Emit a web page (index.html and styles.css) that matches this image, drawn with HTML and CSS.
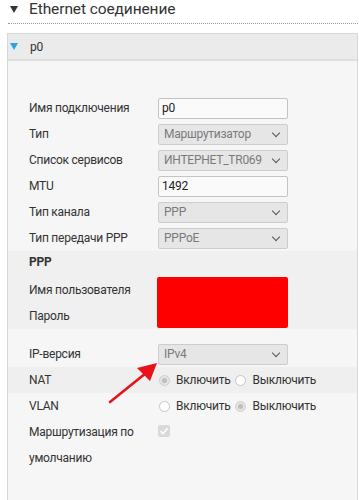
FILE: index.html
```html
<!DOCTYPE html>
<html lang="ru">
<head>
    <meta charset="UTF-8">
    <meta name="viewport" content="width=device-width, initial-scale=1.0">
    <title>Ethernet соединение</title>
    <link rel="stylesheet" href="styles.css">
</head>
<body>
    <div class="section-title">
        <span class="caret-dark"></span>
        <span>Ethernet соединение</span>
    </div>

    <div class="panel">
        <div class="panel-head">
            <span class="caret-blue"></span>
            <span>p0</span>
        </div>

        <div class="panel-body">
            <div class="row">
                <label class="label">Имя подключения</label>
                <input class="field" type="text" value="p0">
            </div>
            <div class="row">
                <label class="label">Тип</label>
                <div class="select"><span>Маршрутизатор</span><span class="chevron"></span></div>
            </div>
            <div class="row">
                <label class="label">Список сервисов</label>
                <div class="select"><span>ИНТЕРНЕТ_TR069</span><span class="chevron"></span></div>
            </div>
            <div class="row">
                <label class="label">MTU</label>
                <input class="field" type="text" value="1492">
            </div>
            <div class="row">
                <label class="label">Тип канала</label>
                <div class="select"><span>PPP</span><span class="chevron"></span></div>
            </div>
            <div class="row">
                <label class="label">Тип передачи PPP</label>
                <div class="select"><span>PPPoE</span><span class="chevron"></span></div>
            </div>

            <!-- PPP credentials -->
            <div class="ppp">
                <div class="ppp-title">PPP</div>
                <div class="ppp-grid">
                    <label class="label">Имя пользователя</label>
                    <div class="hidden-box"></div>
                    <label class="label">Пароль</label>
                </div>
            </div>

            <div class="row row-gap">
                <label class="label">IP-версия</label>
                <div class="select"><span>IPv4</span><span class="chevron"></span></div>
            </div>
            <div class="row row-shade">
                <label class="label">NAT</label>
                <div class="radios">
                    <span class="radio checked"></span><span class="radio-text">Включить</span>
                    <span class="radio"></span><span class="radio-text">Выключить</span>
                </div>
            </div>
            <div class="row">
                <label class="label">VLAN</label>
                <div class="radios">
                    <span class="radio"></span><span class="radio-text">Включить</span>
                    <span class="radio checked"></span><span class="radio-text">Выключить</span>
                </div>
            </div>
            <div class="row row-top">
                <label class="label">Маршрутизация по умолчанию</label>
                <span class="checkbox">
                    <svg width="10" height="10" viewBox="0 0 10 10"><path d="M1.5 5.2 L4 7.6 L8.6 2.2" fill="none" stroke="#fff" stroke-width="1.6"/></svg>
                </span>
            </div>
        </div>
    </div>

    <!-- annotation arrow -->
    <svg class="arrow" width="359" height="500" viewBox="0 0 359 500">
        <line x1="110" y1="402" x2="146" y2="373" stroke="#e8121b" stroke-width="2.6" stroke-linecap="round"/>
        <polygon points="157,363 137,368 150,381" fill="#e8121b"/>
    </svg>
</body>
</html>
```

FILE: styles.css
```css
body {
    margin: 0;
    padding: 0;
    background-color: #fff;
    font-family: Roboto, "Noto Sans", Arial, sans-serif;
    font-size: 12px;
    letter-spacing: -0.25px;
    color: #333;
    position: relative;
    overflow: hidden;
    height: 500px;
}
.section-title {
    display: flex;
    align-items: center;
    gap: 11px;
    margin: 0 1px 0 8px;
    padding: 0 0 4px 2px;
    height: 19px;
    line-height: 19px;
    font-size: 15.5px;
    letter-spacing: -0.1px;
    color: #333;
    border-bottom: 1px dotted #999;
}
.caret-dark {
    width: 0;
    height: 0;
    border-left: 4px solid transparent;
    border-right: 4px solid transparent;
    border-top: 7px solid #333;
}
.panel {
    margin: 9px 1px 0 7px;
    border: 1px solid #d8d8d8;
    border-bottom: none;
    height: 470px;
}
.panel-head {
    display: flex;
    align-items: center;
    gap: 12px;
    height: 25px;
    padding-left: 2px;
    background-color: #ebebeb;
    border-bottom: 2px solid #dedede;
}
.caret-blue {
    width: 0;
    height: 0;
    border-left: 4px solid transparent;
    border-right: 4px solid transparent;
    border-top: 7px solid #2aa4e2;
}
.panel-body {
    background-color: #f6f6f6;
    padding-top: 34px;
    height: 409px;
}
.row {
    display: flex;
    align-items: center;
    height: 26px;
    padding-left: 21px;
}
.row-gap {
    margin-top: 12px;
}
.row-shade {
    background-color: #efefef;
}
.row-top {
    align-items: flex-start;
    height: 52px;
}
.label {
    width: 129px;
    flex: none;
    line-height: 26px;
}
.field {
    box-sizing: border-box;
    width: 130px;
    height: 21px;
    margin: 0;
    padding: 0 3px;
    border: 1px solid #c4c4c4;
    border-radius: 2px;
    background-color: #fafafa;
    font-family: inherit;
    font-size: 12px;
    letter-spacing: -0.25px;
    color: #222;
}
.select {
    box-sizing: border-box;
    display: flex;
    align-items: center;
    justify-content: space-between;
    width: 130px;
    height: 21px;
    padding: 0 8px 0 5px;
    border: 1px solid #cdcdcd;
    border-radius: 2px;
    background-color: #e6e6e6;
    color: #7a7a7a;
}
.chevron {
    width: 5px;
    height: 5px;
    border-right: 1.5px solid #555;
    border-bottom: 1.5px solid #555;
    transform: rotate(45deg);
    margin-top: -3px;
}
.ppp {
    background-color: #f0f0f0;
    padding-top: 1px;
    height: 77px;
}
.ppp-title {
    font-weight: bold;
    line-height: 20px;
    height: 25px;
    padding-left: 21px;
}
.ppp-grid {
    display: grid;
    grid-template-columns: 128px 131px;
    grid-template-rows: 26px 26px;
    padding-left: 21px;
}
.hidden-box {
    grid-row: 1 / span 2;
    grid-column: 2;
    height: 51px;
    background-color: #ff0000;
    border-radius: 2px;
}
.radios {
    display: flex;
    align-items: center;
    margin-left: 1px;
}
.radio {
    box-sizing: border-box;
    width: 11px;
    height: 11px;
    border: 1px solid #c6c6c6;
    border-radius: 50%;
    background-color: #fff;
    position: relative;
}
.radio.checked {
    background-color: #e4e4e4;
    border-color: #cfcfcf;
}
.radio.checked::after {
    content: "";
    position: absolute;
    left: 2px;
    top: 2px;
    width: 5px;
    height: 5px;
    border-radius: 50%;
    background-color: #bdbdbd;
}
.radio-text {
    margin-left: 6px;
    margin-right: 5px;
}
.checkbox {
    display: flex;
    align-items: center;
    justify-content: center;
    width: 12px;
    height: 12px;
    margin-top: 6px;
    border-radius: 2px;
    background-color: #d9d9d9;
}
.arrow {
    position: absolute;
    left: 0;
    top: 0;
    pointer-events: none;
}
```
